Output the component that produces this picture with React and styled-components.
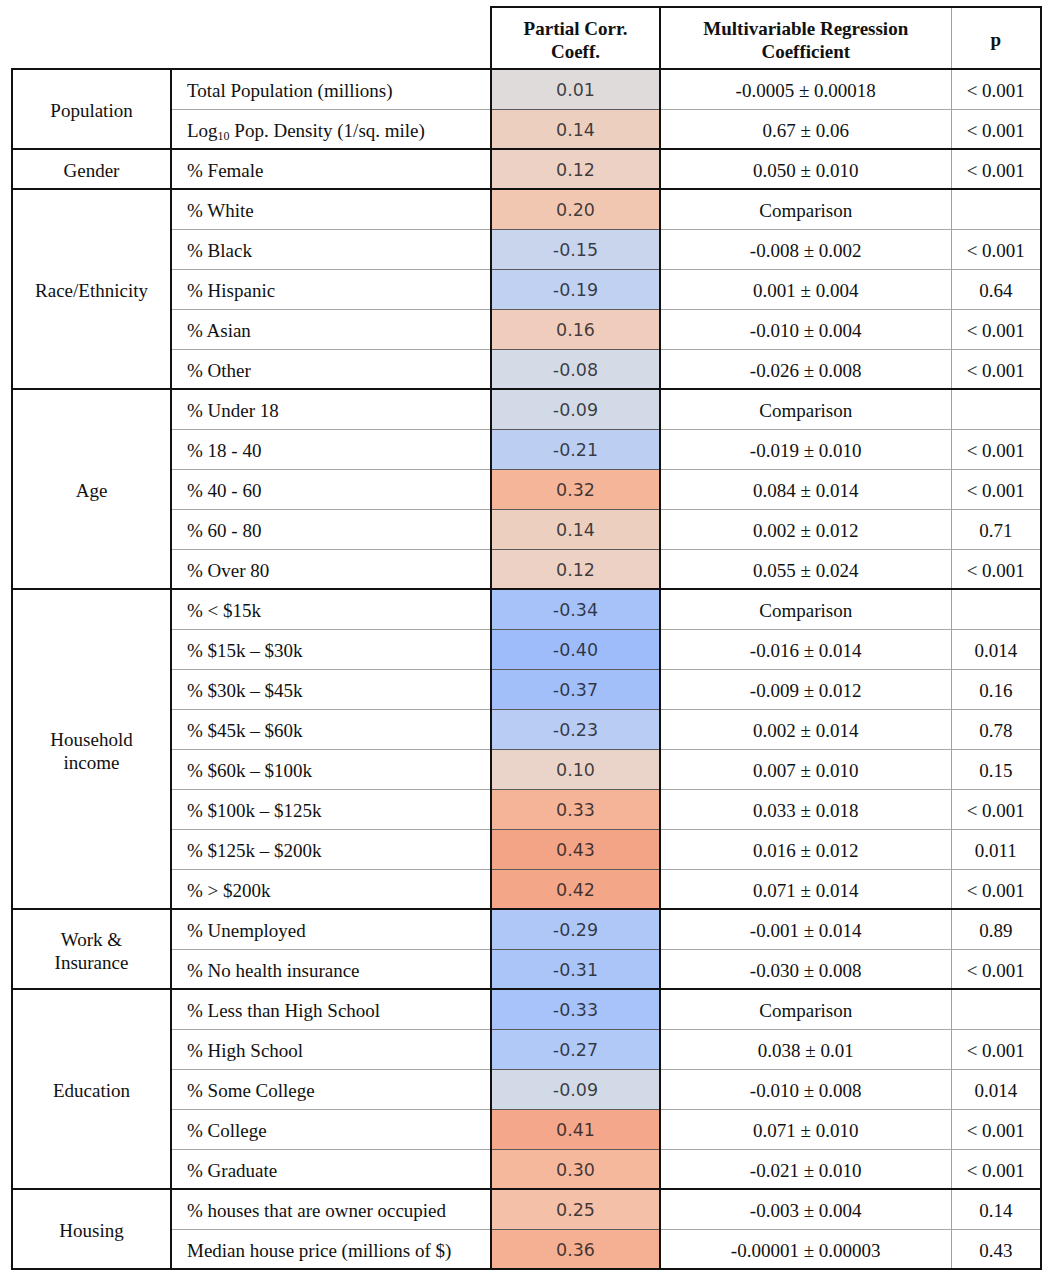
import React from 'react'
import styled, { createGlobalStyle } from 'styled-components'

const GlobalStyle = createGlobalStyle`
  body {
    margin: 0;
    background: #ffffff;
    font-family: "Liberation Serif", "Times New Roman", serif;
    color: #111111;
  }
`;

const Page = styled.div`
  padding: 6px 0 0 11px;
`;

const Table = styled.table`
  border-collapse: collapse;
  table-layout: fixed;
  width: 1029px;
  font-size: 19px;
`;

const HeadRow = styled.tr`
  height: 62px;
`;

const Row = styled.tr`
  height: 40px;
`;

const HeadCell = styled.th`
  padding: 3px 0 0 0;
  font-weight: bold;
  line-height: 23px;
  text-align: center;
  vertical-align: middle;
  border-top: 2px solid #111;
  border-bottom: 2px solid #111;
  border-left: ${p => (p.$thinLeft ? '1px solid #a0a0a0' : '2px solid #111')};
  border-right: ${p => (p.$last ? '2px solid #111' : 'none')};
`;

const BlankHead = styled.th`
  border: none;
  padding: 0;
`;

const GroupCell = styled.td`
  border: 2px solid #111;
  text-align: center;
  vertical-align: middle;
  line-height: 23px;
  padding: 3px 4px 0;
`;

const rowLine = (first, color) =>
  first ? '2px solid #111' : `1px solid ${color}`;

const LabelCell = styled.td`
  padding: 4px 0 0 15px;
  white-space: nowrap;
  line-height: 22px;
  border-top: ${p => rowLine(p.$first, '#a8a8a8')};
  border-bottom: ${p => (p.$end ? '2px solid #111' : 'none')};
  border-right: 2px solid #111;
  sub {
    font-size: 12px;
    vertical-align: -3px;
    line-height: 0;
  }
`;

const CorrCell = styled.td`
  padding: 2px 0 0 0;
  text-align: center;
  line-height: 22px;
  font-family: "DejaVu Sans", Verdana, sans-serif;
  font-size: 17.5px;
  color: rgba(15, 15, 20, 0.78);
  background: ${p => p.$bg};
  border-top: ${p => rowLine(p.$first, '#5a5a5a')};
  border-bottom: ${p => (p.$end ? '2px solid #111' : 'none')};
  border-left: 2px solid #111;
  border-right: 2px solid #111;
`;

const ValueCell = styled.td`
  padding: 4px 0 0 0;
  text-align: center;
  white-space: nowrap;
  line-height: 22px;
  border-top: ${p => rowLine(p.$first, '#a8a8a8')};
  border-bottom: ${p => (p.$end ? '2px solid #111' : 'none')};
  border-right: ${p => (p.$edge ? '2px solid #111' : '1px solid #a0a0a0')};
`;

const stops = [
  [-0.4, [158, 188, 250]],
  [-0.3, [172, 198, 248]],
  [-0.2, [190, 208, 242]],
  [-0.1, [210, 218, 232]],
  [0, [221, 220, 220]],
  [0.1, [234, 212, 201]],
  [0.2, [242, 199, 178]],
  [0.3, [245, 184, 157]],
  [0.43, [244, 164, 134]],
]

function heat(v) {
  if (v <= stops[0][0]) return `rgb(${stops[0][1].join(',')})`
  for (let i = 1; i < stops.length; i++) {
    const [x1, c1] = stops[i]
    const [x0, c0] = stops[i - 1]
    if (v <= x1) {
      const t = (v - x0) / (x1 - x0)
      const c = c0.map((a, k) => Math.round(a + (c1[k] - a) * t))
      return `rgb(${c.join(',')})`
    }
  }
  return `rgb(${stops[stops.length - 1][1].join(',')})`
}

const groups = [
  {
    name: 'Population',
    rows: [
      ['Total Population (millions)', '0.01', '-0.0005 ± 0.00018', '< 0.001'],
      [<>Log<sub>10</sub> Pop. Density (1/sq. mile)</>, '0.14', '0.67 ± 0.06', '< 0.001'],
    ],
  },
  {
    name: 'Gender',
    rows: [['% Female', '0.12', '0.050 ± 0.010', '< 0.001']],
  },
  {
    name: 'Race/Ethnicity',
    rows: [
      ['% White', '0.20', 'Comparison', ''],
      ['% Black', '-0.15', '-0.008 ± 0.002', '< 0.001'],
      ['% Hispanic', '-0.19', '0.001 ± 0.004', '0.64'],
      ['% Asian', '0.16', '-0.010 ± 0.004', '< 0.001'],
      ['% Other', '-0.08', '-0.026 ± 0.008', '< 0.001'],
    ],
  },
  {
    name: 'Age',
    rows: [
      ['% Under 18', '-0.09', 'Comparison', ''],
      ['% 18 - 40', '-0.21', '-0.019 ± 0.010', '< 0.001'],
      ['% 40 - 60', '0.32', '0.084 ± 0.014', '< 0.001'],
      ['% 60 - 80', '0.14', '0.002 ± 0.012', '0.71'],
      ['% Over 80', '0.12', '0.055 ± 0.024', '< 0.001'],
    ],
  },
  {
    name: <>Household<br />income</>,
    rows: [
      ['% < $15k', '-0.34', 'Comparison', ''],
      ['% $15k – $30k', '-0.40', '-0.016 ± 0.014', '0.014'],
      ['% $30k – $45k', '-0.37', '-0.009 ± 0.012', '0.16'],
      ['% $45k – $60k', '-0.23', '0.002 ± 0.014', '0.78'],
      ['% $60k – $100k', '0.10', '0.007 ± 0.010', '0.15'],
      ['% $100k – $125k', '0.33', '0.033 ± 0.018', '< 0.001'],
      ['% $125k – $200k', '0.43', '0.016 ± 0.012', '0.011'],
      ['% > $200k', '0.42', '0.071 ± 0.014', '< 0.001'],
    ],
  },
  {
    name: <>Work &amp;<br />Insurance</>,
    rows: [
      ['% Unemployed', '-0.29', '-0.001 ± 0.014', '0.89'],
      ['% No health insurance', '-0.31', '-0.030 ± 0.008', '< 0.001'],
    ],
  },
  {
    name: 'Education',
    rows: [
      ['% Less than High School', '-0.33', 'Comparison', ''],
      ['% High School', '-0.27', '0.038 ± 0.01', '< 0.001'],
      ['% Some College', '-0.09', '-0.010 ± 0.008', '0.014'],
      ['% College', '0.41', '0.071 ± 0.010', '< 0.001'],
      ['% Graduate', '0.30', '-0.021 ± 0.010', '< 0.001'],
    ],
  },
  {
    name: 'Housing',
    rows: [
      ['% houses that are owner occupied', '0.25', '-0.003 ± 0.004', '0.14'],
      ['Median house price (millions of $)', '0.36', '-0.00001 ± 0.00003', '0.43'],
    ],
  },
]

export default function App() {
  return (
    <Page>
      <GlobalStyle />
      <Table>
        <colgroup>
          <col style={{ width: 159 }} />
          <col style={{ width: 320 }} />
          <col style={{ width: 169 }} />
          <col style={{ width: 291 }} />
          <col style={{ width: 90 }} />
        </colgroup>
        <thead>
          <HeadRow>
            <BlankHead />
            <BlankHead />
            <HeadCell>Partial Corr.<br />Coeff.</HeadCell>
            <HeadCell>Multivariable Regression<br />Coefficient</HeadCell>
            <HeadCell $thinLeft $last>p</HeadCell>
          </HeadRow>
        </thead>
        <tbody>
          {groups.map((g, gi) =>
            g.rows.map((r, ri) => {
              const first = ri === 0
              const end = gi === groups.length - 1 && ri === g.rows.length - 1
              return (
                <Row key={`${gi}-${ri}`}>
                  {first && <GroupCell rowSpan={g.rows.length}>{g.name}</GroupCell>}
                  <LabelCell $first={first} $end={end}>{r[0]}</LabelCell>
                  <CorrCell $first={first} $end={end} $bg={heat(parseFloat(r[1]))}>{r[1]}</CorrCell>
                  <ValueCell $first={first} $end={end}>{r[2]}</ValueCell>
                  <ValueCell $first={first} $end={end} $edge>{r[3]}</ValueCell>
                </Row>
              )
            })
          )}
        </tbody>
      </Table>
    </Page>
  )
}
